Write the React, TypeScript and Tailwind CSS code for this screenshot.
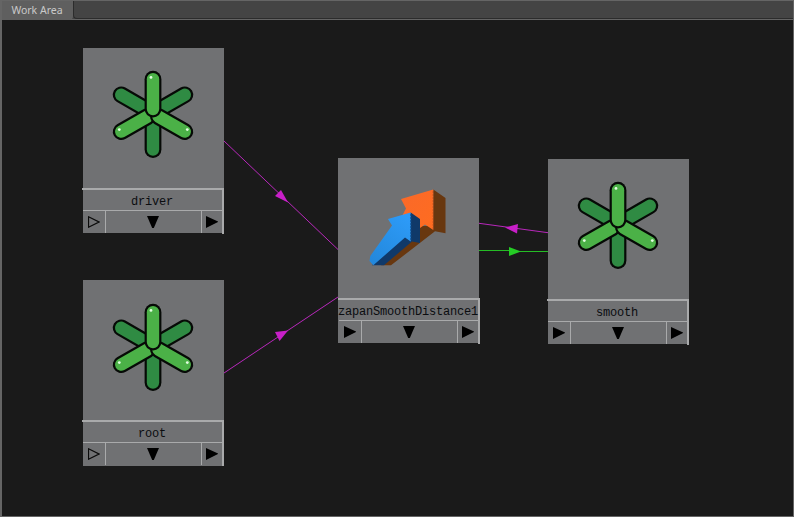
const INK = '#060a06';
const GREEN = '#4bb147';
const DARK_GREEN = '#2f8b43';

type Arm = { x1: number; y1: number; x2: number; y2: number; color: string };

const ARMS: Arm[] = [
  { x1: 38.2, y1: 46.8, x2: 68, y2: 64, color: DARK_GREEN },
  { x1: 101.8, y1: 46.8, x2: 72, y2: 64, color: DARK_GREEN },
  { x1: 70, y1: 70, x2: 70, y2: 101.5, color: DARK_GREEN },
  { x1: 38.2, y1: 83.6, x2: 64.5, y2: 68.6, color: GREEN },
  { x1: 101.8, y1: 83.6, x2: 75.5, y2: 68.6, color: GREEN },
  { x1: 70, y1: 31.2, x2: 70, y2: 61, color: GREEN },
];

function StarIcon() {
  return (
    <svg className="block" width="141" height="140" viewBox="0 0 141 140" strokeLinecap="round">
      {ARMS.map((a, i) => (
        <g key={i}>
          <line x1={a.x1} y1={a.y1} x2={a.x2} y2={a.y2} stroke={INK} strokeWidth="16.8" />
          <line x1={a.x1} y1={a.y1} x2={a.x2} y2={a.y2} stroke={a.color} strokeWidth="12.4" />
        </g>
      ))}
      <g fill="#e4ffe2">
        <circle cx="68" cy="29.4" r="1.4" />
        <circle cx="36.3" cy="81.6" r="1.4" />
        <circle cx="104.3" cy="81.6" r="1.4" />
      </g>
    </svg>
  );
}

function ArrowsIcon() {
  return (
    <svg className="block" width="141" height="140" viewBox="0 0 141 140">
      <defs>
        <linearGradient id="blue" x1="0.8" y1="0" x2="0.2" y2="1">
          <stop offset="0" stopColor="#2d9bf8" />
          <stop offset="1" stopColor="#2388dc" />
        </linearGradient>
        <linearGradient id="orange" x1="0" y1="0" x2="1" y2="1">
          <stop offset="0" stopColor="#f9692a" />
          <stop offset="1" stopColor="#ff6c20" />
        </linearGradient>
      </defs>
      <path d="M95.3 31.5 L107.5 40 L107.5 75.3 L97 73.3 L53 107.3 L43 107.3 L75 78 L80 68 L95 68 Z" fill="#68370f" />
      <path d="M95.3 31.5 L95.3 72 L87 66.5 L82 70 L60 70 L63 60 L68 50.5 L63 41 Z" fill="url(#orange)" />
      <path d="M72.7 54.5 L82 61 L82 85 L74 83.5 L46 107.3 L34 107.3 L60 78 Z" fill="#103969" />
      <path d="M72.7 54.5 L72.7 83.5 L67 79.5 L35.3 107.3 L31.5 103 L32.3 98 L54 67.5 L50 61 Z" fill="url(#blue)" />
      <path d="M95.3 33 V72" stroke="#9a451a" strokeWidth="1" strokeDasharray="2 1" />
      <path d="M72.7 56 V83" stroke="#145aa0" strokeWidth="1" strokeDasharray="2 1" />
    </svg>
  );
}

function Right({ hollow = false }: { hollow?: boolean }) {
  return (
    <svg className="block" width="12" height="12" viewBox="0 0 12 12">
      {hollow ? (
        <path d="M0.5 0.8 L11 6 L0.5 11.2 Z" fill="none" stroke="#0a0a0a" strokeWidth="1.2" />
      ) : (
        <path d="M0 0 L12.4 5.8 L0 12 Z" fill="#000" />
      )}
    </svg>
  );
}

type NodeProps = {
  name: string;
  place: string;
  strip?: string;
  icon?: 'star' | 'arrows';
  iconBox?: string;
  hollow?: boolean;
};

function GraphNode({
  name,
  place,
  strip = '-ml-px w-[142px]',
  icon = 'star',
  iconBox = '',
  hollow = false,
}: NodeProps) {
  return (
    <div className={`absolute flex w-[141px] flex-col bg-[#707173] ${place}`}>
      <div className={`h-[140px] shrink-0 ${iconBox}`}>{icon === 'star' ? <StarIcon /> : <ArrowsIcon />}</div>
      <div className={`flex h-[46px] shrink-0 flex-col border-t-2 border-r-2 border-[#a9aaab] pl-px ${strip}`}>
        <div className="flex h-5 items-center justify-center pt-[3px] pr-px font-['Liberation_Mono',monospace] text-[12px] leading-none tracking-[-0.2px] whitespace-nowrap text-[#0b0d10]">
          {name}
        </div>
        <div className="flex h-[23px] border-t border-[#a9aaab]">
          <div className="flex w-[23px] items-center border-r border-[#a9aaab] pl-[5px]">
            <Right hollow={hollow} />
          </div>
          <div className="flex w-24 items-center justify-center border-r border-[#a9aaab] pr-px">
            <svg className="block" width="12" height="12" viewBox="0 0 12 12">
              <path d="M0 0 H12 L6.8 12 H5.2 Z" fill="#000" />
            </svg>
          </div>
          <div className="flex flex-1 items-center pl-1">
            <Right />
          </div>
        </div>
      </div>
    </div>
  );
}

function Connections() {
  return (
    <svg className="absolute top-0 left-0" width="794" height="517" viewBox="0 0 794 517">
      <g stroke="#b828bb" strokeWidth="1">
        <path d="M224 141 L338 249.5" />
        <path d="M224 373 L338 297" />
        <path d="M479 223.3 L548 232.7" />
      </g>
      <path d="M479 250.5 H514 L514 251.5 H548" stroke="#25bd25" fill="none" />
      <g fill="#c81fc8">
        <path d="M281 190 L275 196 L288 202.5 Z" />
        <path d="M275 332 L288 330.5 L279.5 341 Z" />
        <path d="M518 224 L505 227.5 L517 233.5 Z" />
      </g>
      <path d="M509 247 L521 251.5 L509 256 Z" fill="#25cc25" />
    </svg>
  );
}

export default function App() {
  return (
    <div className="relative flex h-[517px] w-[794px] flex-col overflow-hidden border-t border-r border-b border-l-2 border-[#656565] bg-[#1a1a1a]">
      <div className="flex h-[19px] shrink-0 border-b border-[#646464] bg-[#444444]">
        <div className="-mb-px flex w-[71px] items-center justify-center rounded-br-sm bg-[#5f5f5f] pr-px font-['Noto_Sans',sans-serif] text-[10.5px] leading-none whitespace-nowrap text-[#c9c9c9]">
          Work Area
        </div>
        <div className="flex-1 rounded-bl border-b border-l border-[#2c2c2c]" />
      </div>
      <div className="absolute -top-px -left-0.5 h-[517px] w-[794px]">
        <Connections />
        <GraphNode name="driver" place="left-[83px] top-[48px] h-[185px]" hollow />
        <GraphNode name="root" place="left-[83px] top-[280px] h-[186px]" iconBox="pt-px" hollow />
        <GraphNode
          name="zapanSmoothDistance1"
          place="left-[338px] top-[158px] h-[185px]"
          strip="w-[142px]"
          icon="arrows"
        />
        <GraphNode name="smooth" place="left-[548px] top-[159px] h-[185px]" />
      </div>
    </div>
  );
}
